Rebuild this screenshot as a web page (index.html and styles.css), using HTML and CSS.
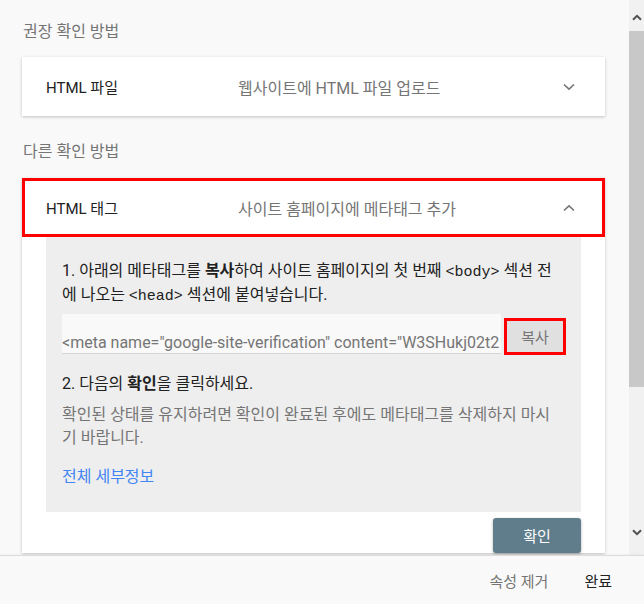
FILE: index.html
```html
<!DOCTYPE html>
<html lang="ko">
<head>
<meta charset="utf-8">
<title>소유권 확인</title>
<link rel="stylesheet" href="styles.css">
</head>
<body>
<div class="app">
  <div class="main">
    <div class="content">
      <div class="section-label">권장 확인 방법</div>
      <div class="card">
        <div class="card-header">
          <span class="card-title">HTML 파일</span>
          <span class="card-desc">웹사이트에 HTML 파일 업로드</span>
          <svg class="chev" width="12" height="8" viewBox="0 0 12 8"><path d="M1 1.5 L6 6.2 L11 1.5" fill="none" stroke="#757575" stroke-width="1.6"/></svg>
        </div>
      </div>

      <div class="section-label second">다른 확인 방법</div>
      <div class="card open">
        <div class="card-header marked">
          <span class="card-title">HTML 태그</span>
          <span class="card-desc">사이트 홈페이지에 메타태그 추가</span>
          <svg class="chev" width="12" height="8" viewBox="0 0 12 8"><path d="M1 6.5 L6 1.8 L11 6.5" fill="none" stroke="#757575" stroke-width="1.6"/></svg>
        </div>
        <div class="card-body">
          <div class="panel">
            <p class="step">1. 아래의 메타태그를 <b>복사</b>하여 사이트 홈페이지의 첫 번째 <code>&lt;body&gt;</code> 섹션 전<br>에 나오는 <code>&lt;head&gt;</code> 섹션에 붙여넣습니다.</p>
            <div class="copy-row">
              <div class="meta-field">&lt;meta name="google-site-verification" content="W3SHukj02t2</div>
              <button class="copy-btn">복사</button>
            </div>
            <p class="step step2">2. 다음의 <b>확인</b>을 클릭하세요.</p>
            <p class="note">확인된 상태를 유지하려면 확인이 완료된 후에도 메타태그를 삭제하지 마시<br>기 바랍니다.</p>
            <a class="details" href="#">전체 세부정보</a>
          </div>
          <div class="actions">
            <button class="verify-btn">확인</button>
          </div>
        </div>
      </div>
    </div>
    <div class="scrollbar">
      <div class="sb-btn up"><svg width="10" height="7" viewBox="0 0 10 7"><path d="M1 5.8 L5 1.8 L9 5.8" fill="none" stroke="#505050" stroke-width="2"/></svg></div>
      <div class="sb-thumb"></div>
      <div class="sb-track"></div>
      <div class="sb-btn down"><svg width="10" height="7" viewBox="0 0 10 7"><path d="M1 1.2 L5 5.2 L9 1.2" fill="none" stroke="#505050" stroke-width="2"/></svg></div>
    </div>
  </div>
  <div class="footer">
    <button class="text-btn muted">속성 제거</button>
    <button class="text-btn">완료</button>
  </div>
</div>
</body>
</html>
```

FILE: styles.css
```css
* { box-sizing: border-box; }
html, body { margin: 0; padding: 0; }
body {
  background: #f9f9f9;
  font-family: Roboto, "Noto Sans CJK KR", sans-serif;
  color: #212121;
  width: 644px;
  height: 604px;
  overflow: hidden;
}
.app { display: flex; flex-direction: column; height: 604px; }
.main { display: flex; height: 555px; overflow: hidden; }
.content {
  flex: 1;
  padding: 22px 24px 0 22px;
  overflow: hidden;
}
.section-label {
  font-size: 16px;
  line-height: 20px;
  color: #757575;
  padding-left: 1px;
  margin-bottom: 15px;
}
.section-label.second { margin-top: 26px; margin-bottom: 16px; }
.card {
  background: #fff;
  box-shadow: 0 1px 3px rgba(0,0,0,0.22);
}
.card-header {
  display: flex;
  align-items: center;
  height: 59px;
  padding: 0 30px 0 24px;
}
.card-header.marked { border: 3px solid #ff0000; padding: 0 27px 0 21px; }
.card-title { width: 192px; font-size: 15px; color: #212121; }
.card-desc { flex: 1; font-size: 16px; color: #757575; }
.chev { display: block; }
.card-body { padding: 0 24px; }
.panel {
  background: #eeeeee;
  padding: 22px 14px 23px 16px;
}
.step {
  margin: 0;
  font-size: 16px;
  line-height: 24px;
  color: #212121;
  white-space: nowrap;
}
.step b { font-weight: 700; }
.step code {
  font-family: "Liberation Mono", monospace;
  font-size: 15px;
  line-height: 0;
}
.copy-row {
  display: flex;
  align-items: flex-end;
  margin-top: 7px;
  gap: 3px;
}
.meta-field {
  width: 439px;
  height: 40px;
  background: #f9f9f9;
  border-bottom: 1px solid #d4d4d4;
  padding: 19px 0 0 0;
  font-size: 16px;
  line-height: 20px;
  color: #757575;
  white-space: nowrap;
  overflow: hidden;
}
.copy-btn {
  width: 62px;
  height: 37px;
  margin-bottom: -1px;
  border: 3px solid #ff0000;
  background: #e0e0e0;
  color: #757575;
  font-family: inherit;
  font-size: 15px;
  padding: 0;
}
.step2 { margin-top: 18px; }
.note {
  margin: 7px 0 0;
  font-size: 16px;
  line-height: 23px;
  color: #757575;
  white-space: nowrap;
}
.details {
  display: block;
  margin-top: 16px;
  font-size: 16px;
  line-height: 24px;
  color: #4285f4;
  text-decoration: none;
}
.actions {
  display: flex;
  justify-content: flex-end;
  padding-top: 6px;
}
.verify-btn {
  width: 88px;
  height: 35px;
  border: none;
  border-radius: 3px;
  background: #607d8b;
  color: #fff;
  font-family: inherit;
  font-size: 15px;
  box-shadow: 0 1px 3px rgba(0,0,0,0.3);
}
.scrollbar {
  width: 15px;
  display: flex;
  flex-direction: column;
  background: #f1f1f1;
}
.sb-btn { display: flex; justify-content: center; }
.sb-btn.up { height: 31px; align-items: flex-start; padding-top: 14px; }
.sb-thumb { height: 356px; background: #c8c8c8; }
.sb-track { flex: 1; }
.sb-btn.down { height: 35px; align-items: flex-start; padding-top: 9px; }
.footer {
  height: 49px;
  border-top: 1px solid #dcdcdc;
  box-shadow: 0 -1px 2px rgba(0,0,0,0.04);
  background: #f9f9f9;
  display: flex;
  align-items: center;
  justify-content: flex-end;
  padding-right: 16px;
  gap: 4px;
}
.text-btn {
  border: none;
  background: none;
  font-family: inherit;
  font-size: 15px;
  color: #212121;
  padding: 0 16px;
}
.text-btn.muted { color: #757575; }
```
